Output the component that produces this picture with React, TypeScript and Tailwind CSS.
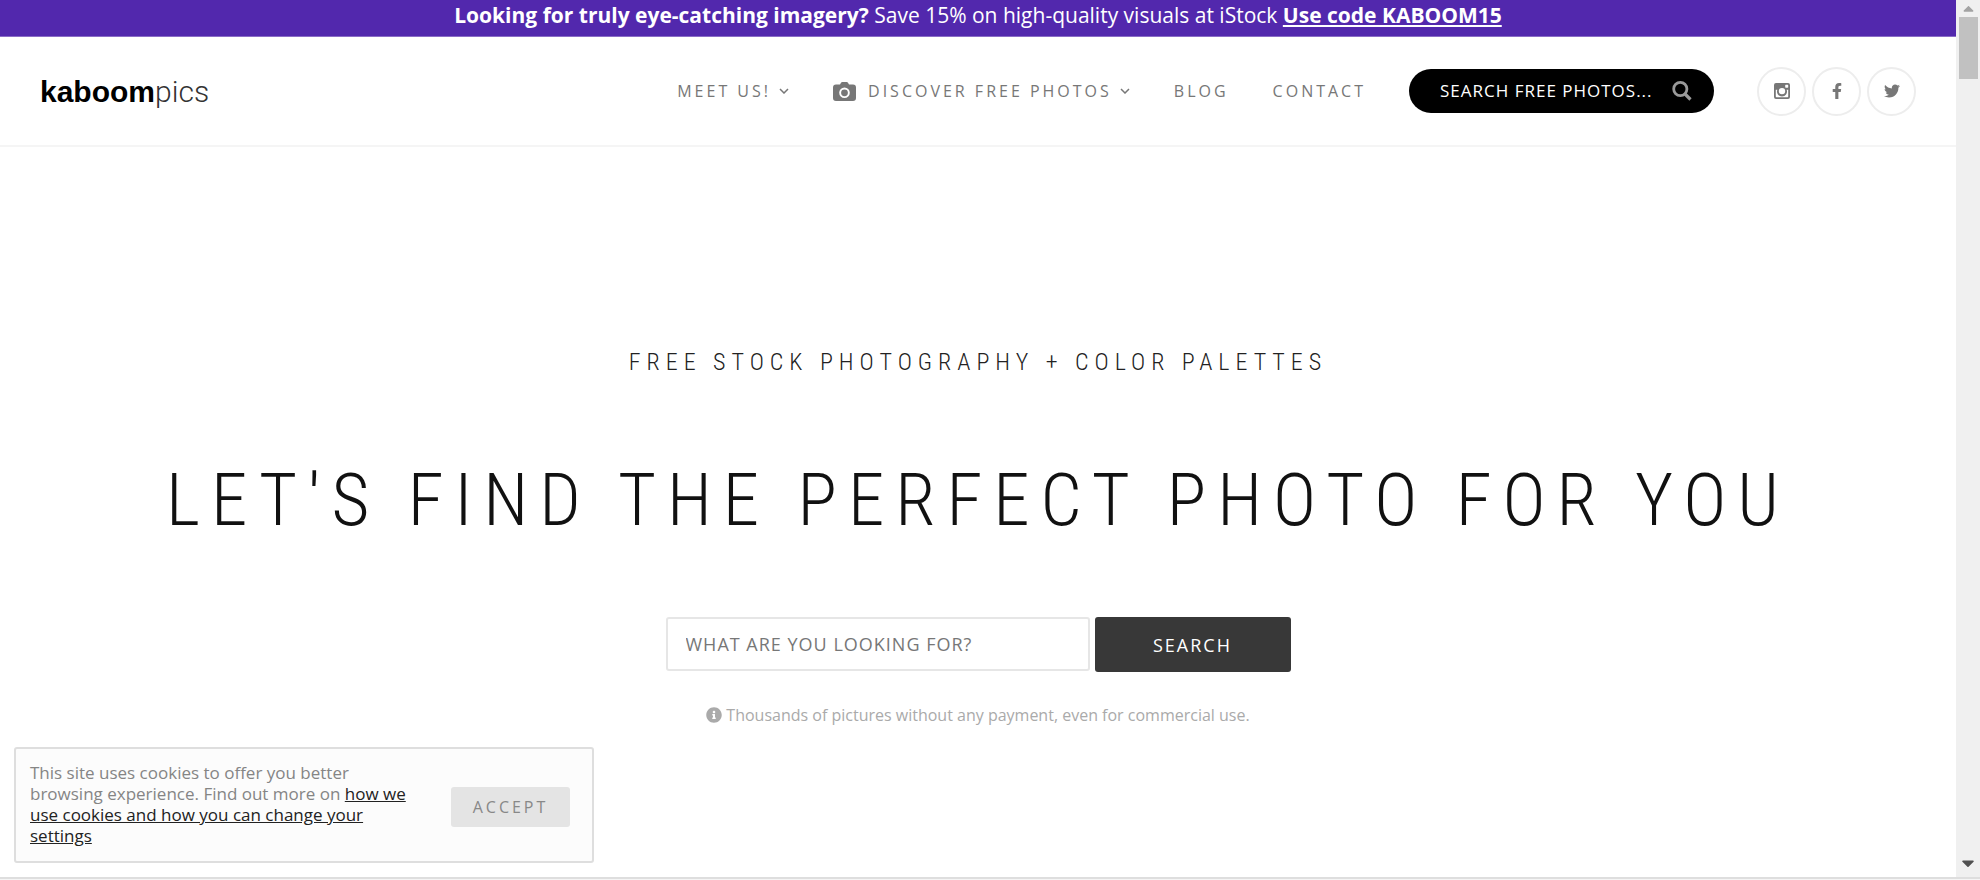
import type { ReactNode } from "react";
import { FaCaretDown, FaCaretUp, FaFacebookF, FaInfoCircle, FaTwitter } from "react-icons/fa";

export default function App() {
  return (
    <div className="flex h-screen flex-col overflow-hidden bg-white font-['Open_Sans','Noto_Sans',sans-serif]">
      <div className="relative flex min-h-0 flex-1">
        <div className="flex min-w-0 flex-1 flex-col">
          <PromoBanner />
          <Header />
          <Hero />
        </div>

        <Scrollbar />
        <CookieNotice />
      </div>

      {/* BOTTOM EDGE */}
      <div className="h-[3px] border-t-2 border-[#dedede] bg-[#f5f5f5]" />
    </div>
  );
}

function PromoBanner() {
  return (
    <div className="h-[37px] border-b border-[#8a6cc6] bg-[#5228ad] text-center text-[21px] leading-[30px] text-white">
      <strong>Looking for truly eye-catching imagery?</strong> Save 15% on
      high-quality visuals at iStock{" "}
      <a href="#istock" className="font-bold underline">
        Use code KABOOM15
      </a>
    </div>
  );
}

function Header() {
  return (
    <header className="flex h-[110px] items-center justify-between border-b-2 border-[#f5f5f5] px-10">
      <a
        href="#home"
        className="pt-0.5 font-['Liberation_Sans',sans-serif] text-[30px] leading-9 text-black"
      >
        <span className="font-bold">kaboom</span>
        <span className="font-['Roboto','Liberation_Sans',sans-serif] font-light text-[#333]">
          pics
        </span>
      </a>

      <div className="flex items-center gap-[43px]">
        <nav className="flex items-center gap-11 text-base tracking-[3px] text-[#777]">
          <a href="#meet" className="flex items-center gap-2">
            MEET US! <ChevronIcon />
          </a>
          <a href="#discover" className="flex items-center gap-2">
            <span className="flex items-center gap-3">
              <CameraIcon />
              DISCOVER FREE PHOTOS
            </span>
            <ChevronIcon />
          </a>
          <a href="#blog">BLOG</a>
          <a href="#contact">CONTACT</a>
        </nav>

        <form className="flex h-11 w-[305px] items-center justify-between rounded-full bg-black pr-[22px] pl-[31px]">
          <input
            type="text"
            aria-label="Search free photos"
            placeholder="SEARCH FREE PHOTOS..."
            className="min-w-0 flex-1 bg-transparent text-[17px] tracking-[1px] text-white outline-none placeholder:text-white"
          />
          <button type="button" aria-label="Search">
            <SearchIcon />
          </button>
        </form>

        <div className="flex gap-1.5 text-[#777]">
          <SocialLink label="Instagram">
            <InstagramIcon />
          </SocialLink>
          <SocialLink label="Facebook">
            <FaFacebookF size={16} />
          </SocialLink>
          <SocialLink label="Twitter">
            <FaTwitter size={16} />
          </SocialLink>
        </div>
      </div>
    </header>
  );
}

function Hero() {
  return (
    <main className="flex flex-col items-center pt-[195px]">
      <h2 className="font-['Roboto_Condensed','Roboto',sans-serif] text-[24px] leading-10 font-light tracking-[6px] text-[#222]">
        FREE STOCK PHOTOGRAPHY + COLOR PALETTES
      </h2>

      <h1 className="mt-[68px] font-['Roboto_Condensed','Roboto',sans-serif] text-[73px] leading-[100px] font-light tracking-[11px] whitespace-nowrap text-[#111]">
        LET'S FIND THE PERFECT PHOTO FOR YOU
      </h1>

      <form className="mt-[67px] flex items-start gap-[5px]">
        <input
          type="text"
          aria-label="What are you looking for?"
          placeholder="WHAT ARE YOU LOOKING FOR?"
          className="h-[54px] w-[424px] rounded-[3px] border-2 border-[#e6e6e6] px-[18px] text-lg tracking-[1px] text-[#777] outline-none placeholder:text-[#777]"
        />
        <button
          type="button"
          className="h-[55px] w-[196px] rounded-[3px] bg-[#383838] text-lg tracking-[2px] text-white"
        >
          SEARCH
        </button>
      </form>

      <p className="mt-[31px] flex items-center gap-1 text-base leading-6 text-[#aaa]">
        <FaInfoCircle size={16} />
        Thousands of pictures without any payment, even for commercial use.
      </p>
    </main>
  );
}

function CookieNotice() {
  return (
    <aside className="absolute bottom-[14px] left-[14px] flex w-[580px] items-center rounded-[3px] border-2 border-[#dedede] bg-[#fcfcfc] pt-[13px] pr-[22px] pb-[15px] pl-[14px]">
      <p className="flex-1 pr-8 text-[17px] leading-[21px] text-[#858585]">
        This site uses cookies to offer you better browsing experience. Find out
        more on{" "}
        <a href="#cookies" className="text-[#222] underline">
          how we use cookies and how you can change your settings
        </a>
      </p>
      <button
        type="button"
        className="mt-1.5 h-10 w-[119px] rounded-[3px] bg-[#e4e4e4] text-base tracking-[3px] text-[#888]"
      >
        ACCEPT
      </button>
    </aside>
  );
}

function Scrollbar() {
  return (
    <div className="flex w-6 flex-col items-center justify-between bg-[#f0f0f0] pb-1">
      <div className="flex w-full flex-col items-center">
        <FaCaretUp size={17} className="text-[#a3a3a3]" />
        <div className="h-[62px] w-[19px] bg-[#c1c1c1]" />
      </div>
      <FaCaretDown size={20} className="text-[#505050]" />
    </div>
  );
}

interface SocialLinkProps {
  label: string;
  children: ReactNode;
}

function SocialLink({ label, children }: SocialLinkProps) {
  return (
    <a
      href={`#${label.toLowerCase()}`}
      aria-label={label}
      className="flex size-[49px] items-center justify-center rounded-full border-2 border-[#ededed]"
    >
      {children}
    </a>
  );
}

function ChevronIcon() {
  return (
    <svg width="10" height="6" viewBox="0 0 10 6" fill="none" stroke="currentColor" strokeWidth="1.5">
      <path d="M1 1l4 4 4-4" />
    </svg>
  );
}

function CameraIcon() {
  return (
    <svg width="23" height="19" viewBox="0 0 23 19" fill="currentColor">
      <path
        fillRule="evenodd"
        d="M7 2.5L8 .8Q8.4 0 9.3 0h4.4Q14.6 0 15 .8l1 1.7h4q3 0 3 3V16q0 3-3 3H3q-3 0-3-3V5.500q0-3 3-3zM11.500 5.500a5.300 5.300 0 1 0 0 10.600 5.300 5.300 0 0 0 0-10.600zm0 1.900a3.400 3.400 0 1 1 0 6.800 3.400 3.400 0 0 1 0-6.800z"
      />
    </svg>
  );
}

function SearchIcon() {
  return (
    <svg width="20" height="20" viewBox="0 0 20 20" fill="none" stroke="#999" strokeWidth="2.8">
      <circle cx="8.3" cy="8" r="6.6" />
      <path d="M13 13l5.500 5.500" strokeWidth="3.2" />
    </svg>
  );
}

function InstagramIcon() {
  return (
    <svg width="16" height="16" viewBox="0 0 16 16" fill="currentColor">
      <path
        fillRule="evenodd"
        d="M2 0h12q2 0 2 2v12q0 2-2 2H2q-2 0-2-2V2q0-2 2-2zM11.800 1.800q-.6 0-.6.600v1.700q0 .6.600.600h1.800q.6 0 .6-.600V2.400q0-.6-.6-.600zM1.800 6.800v6.700q0 .7.700.700h11q.7 0 .7-.700V6.800h-1.500a5 5 0 1 1-9.400 0zM8 4.900a3.200 3.200 0 1 0 0 6.400 3.200 3.200 0 0 0 0-6.400z"
      />
    </svg>
  );
}
